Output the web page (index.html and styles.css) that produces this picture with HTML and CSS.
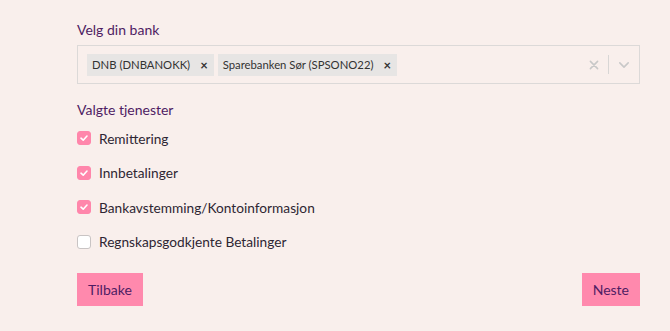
FILE: index.html
```html
<!DOCTYPE html>
<html lang="no">
<head>
  <meta charset="UTF-8">
  <meta name="viewport" content="width=device-width, initial-scale=1.0">
  <title>Velg bank</title>
  <link rel="stylesheet" href="styles.css">
</head>
<body>
  <div class="form-wrap">
    <label class="field-label">Velg din bank</label>
    <div class="select-box">
      <div class="chips">
        <span class="chip">DNB (DNBANOKK) <span class="chip-remove">&#215;</span></span>
        <span class="chip">Sparebanken Sør (SPSONO22) <span class="chip-remove">&#215;</span></span>
      </div>
      <div class="indicators">
        <svg class="clear-icon" width="12" height="12" viewBox="0 0 20 20"><path d="M4 4 L16 16 M16 4 L4 16" stroke="#c8c8c8" stroke-width="2.6" stroke-linecap="round"/></svg>
        <span class="separator"></span>
        <svg class="chevron" width="14" height="14" viewBox="0 0 20 20"><path d="M4 7 L10 13 L16 7" stroke="#c8c8c8" stroke-width="2.2" fill="none" stroke-linecap="round" stroke-linejoin="round"/></svg>
      </div>
    </div>

    <div class="field-label services-label">Valgte tjenester</div>
    <div class="check-list">
      <label class="check-row"><span class="box checked"><svg width="10" height="10" viewBox="0 0 10 10"><path d="M2 5.2 L4.2 7.2 L8 3" stroke="#fff" stroke-width="1.6" fill="none" stroke-linecap="round" stroke-linejoin="round"/></svg></span>Remittering</label>
      <label class="check-row"><span class="box checked"><svg width="10" height="10" viewBox="0 0 10 10"><path d="M2 5.2 L4.2 7.2 L8 3" stroke="#fff" stroke-width="1.6" fill="none" stroke-linecap="round" stroke-linejoin="round"/></svg></span>Innbetalinger</label>
      <label class="check-row"><span class="box checked"><svg width="10" height="10" viewBox="0 0 10 10"><path d="M2 5.2 L4.2 7.2 L8 3" stroke="#fff" stroke-width="1.6" fill="none" stroke-linecap="round" stroke-linejoin="round"/></svg></span>Bankavstemming/Kontoinformasjon</label>
      <label class="check-row"><span class="box"></span>Regnskapsgodkjente Betalinger</label>
    </div>

    <div class="button-row">
      <button class="btn">Tilbake</button>
      <button class="btn">Neste</button>
    </div>
  </div>
</body>
</html>
```

FILE: styles.css
```css
body {
  margin: 0;
  font-family: Lato, 'Open Sans', Arial, sans-serif;
  background-color: #f9efec;
  color: #2e2633;
}

.form-wrap {
  padding: 21px 30px 0 77px;
}

.field-label {
  display: block;
  font-size: 14px;
  color: #4f1c63;
  margin-bottom: 7px;
}

.select-box {
  display: flex;
  align-items: center;
  justify-content: space-between;
  height: 37px;
  border: 1px solid #dcd9d8;
  padding: 0 8px 0 9px;
}

.chips {
  display: flex;
  gap: 4px;
}

.chip {
  display: flex;
  align-items: center;
  height: 22px;
  padding: 0 6px 0 5px;
  background-color: #e7e5e4;
  font-size: 11.3px;
  color: #333;
}

.chip-remove {
  margin-left: 10px;
  font-weight: bold;
  font-size: 13px;
}

.indicators {
  display: flex;
  align-items: center;
}

.clear-icon {
  margin-right: 8px;
}

.separator {
  width: 1px;
  height: 19px;
  background-color: #d8d6d5;
  margin-right: 8px;
}

.services-label {
  margin-top: 17px;
  margin-bottom: 10px;
}

.check-list {
  display: flex;
  flex-direction: column;
  gap: 14.6px;
}

.check-row {
  display: flex;
  align-items: center;
  font-size: 13.7px;
  height: 20px;
  color: #2e2633;
}

.box {
  width: 12px;
  height: 12px;
  border: 1px solid #c9c4c4;
  border-radius: 3px;
  background-color: #fff;
  margin-right: 8px;
  display: flex;
  align-items: center;
  justify-content: center;
}

.box.checked {
  background-color: #ff86ab;
  border-color: #ff86ab;
}

.button-row {
  display: flex;
  justify-content: space-between;
  margin-top: 21px;
}

.btn {
  background-color: #ff89ad;
  color: #4f1c63;
  border: none;
  height: 33px;
  padding: 0 11px;
  font-family: inherit;
  font-size: 14px;
  cursor: pointer;
}
```
